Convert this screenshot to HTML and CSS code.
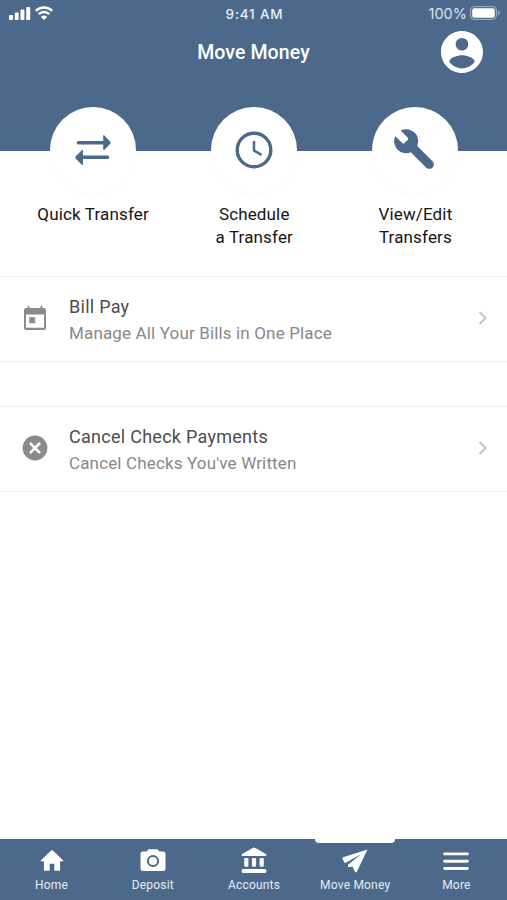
FILE: index.html
```html
<!DOCTYPE html>
<html lang="en">
<head>
<meta charset="utf-8">
<title>Move Money</title>
<link rel="stylesheet" href="styles.css">
</head>
<body>
<div class="app">
  <header class="header">
    <div class="status">
      <div class="status-left">
        <svg class="signal" viewBox="0 0 22 14" fill="#fff"><rect x="0" y="9" width="4" height="5" rx="1"/><rect x="5.7" y="6.5" width="4" height="7.5" rx="1"/><rect x="11.4" y="3.5" width="4" height="10.5" rx="1"/><rect x="17.2" y="1" width="4" height="13" rx="1"/></svg>
        <svg class="wifi" viewBox="0 0 18 14" fill="none" stroke="#fff" stroke-width="2.5"><path d="M.8 4.900a11.800 11.800 0 0 1 16.400 0M3.600 8.200a7.800 7.800 0 0 1 10.800 0"/><path d="M9 14 5.900 11a4.500 4.500 0 0 1 6.200 0z" fill="#fff" stroke="none"/></svg>
      </div>
      <div class="time">9:41 AM</div>
      <div class="status-right"><span class="percent">100%</span>
        <svg class="battery" viewBox="0 0 30 14"><rect x=".6" y=".6" width="25.8" height="12.8" rx="3.5" fill="none" stroke="#a3b3c7"/><rect x="2.2" y="2.2" width="22.6" height="9.6" rx="2" fill="#fff"/><path d="M28 4.800v4.400c1-.4 1.600-1.200 1.600-2.200S29 5.200 28 4.800z" fill="#a3b3c7"/></svg>
      </div>
    </div>
    <div class="titlebar">
      <h1>Move Money</h1>
      <svg class="avatar" viewBox="2 2 20 20" fill="#fff"><path d="M12 2C6.480 2 2 6.480 2 12s4.480 10 10 10 10-4.480 10-10S17.520 2 12 2zm0 3.300c1.660 0 3 1.340 3 3s-1.340 3-3 3-3-1.340-3-3 1.340-3 3-3zm0 14.500c-2.500 0-4.710-1.180-6-3.120.03-1.990 4-3.080 6-3.080 1.990 0 5.970 1.090 6 3.080-1.290 1.940-3.500 3.120-6 3.120z"/></svg>
    </div>
  </header>
  <nav class="actions">
    <a class="action"><span class="disc"><svg viewBox="0 0 86 86" fill="#4c698b"><path d="M28.500 34h24.700v-5.200q.1-1.300 1.200-.4l5.900 6.300q.9 1 0 2l-5.900 6.100q-1.100.8-1.200-.5V37.500H28.500a1.750 1.750 0 0 1 0-3.500zM57.500 52H33v5.300q-.1 1.300-1.200.4l-6.200-6.200q-.9-1 0-2l6.200-6.300q1.100-.9 1.200.4v4.900h24.500a1.750 1.750 0 0 1 0 3.500z"/></svg></span><span>Quick Transfer</span></a>
    <a class="action"><span class="disc"><svg viewBox="0 0 86 86" fill="none" stroke="#4c698b"><circle cx="43" cy="43" r="16.800" stroke-width="3.400"/><path d="M43 34v9.500l7.500 4.300" stroke-width="2.500"/></svg></span><span>Schedule<br>a Transfer</span></a>
    <a class="action"><span class="disc"><svg viewBox="0 0 86 86" fill="#4c698b"><path d="M28.700 23.600C34 20.700 40.800 23 44.300 27.500C46.500 30.800 46.600 35 45.300 38.900L60.700 54.400C64.500 58.800 58.600 64.300 54.300 60.700L38.900 45.300C34.600 47 29.600 46.500 26.200 43.200C22.200 39.200 21 33.900 23.300 29.200L30.300 36.100Q31.400 37.200 32.500 36.100L35.800 32.900Q36.800 31.800 35.800 30.700Z"/></svg></span><span>View/Edit<br>Transfers</span></a>
  </nav>
  <main>
    <a class="row">
      <svg class="row-icon" viewBox="0 0 26 26" fill="#8b8b8b"><path fill-rule="evenodd" d="M5.500 1h2v2h11V1h2v2h1.500q2 0 2 2v18q0 2-2 2H4q-2 0-2-2V5q0-2 2-2h1.500zM4 9.500v13.200h18V9.500zM7.200 12.300h6v6h-6z"/></svg>
      <span class="row-text"><strong>Bill Pay</strong><small>Manage All Your Bills in One Place</small></span>
      <svg class="chevron" viewBox="0 0 10 14"><path d="m1.500 1 6 6-6 6"/></svg>
    </a>
    <a class="row">
      <svg class="row-icon" viewBox="0 0 26 26"><circle cx="13" cy="13" r="12.400" fill="#8b8b8b"/><path d="m8 8 10 10M18 8 8 18" stroke="#fff" stroke-width="2.500"/></svg>
      <span class="row-text"><strong>Cancel Check Payments</strong><small>Cancel Checks You've Written</small></span>
      <svg class="chevron" viewBox="0 0 10 14"><path d="m1.500 1 6 6-6 6"/></svg>
    </a>
  </main>
  <nav class="tabs">
    <a class="tab"><svg viewBox="0 0 30 28" fill="#fff"><path d="M14.100 4.600q.9-.8 1.800 0l10.300 9.800q.4.900-.5.900h-2.600v8.600q0 .9-.9.900h-4.900v-7h-4.600v7H7.800q-.9 0-.9-.9v-8.600H4.300q-.9 0-.5-.9z"/></svg><span>Home</span></a>
    <a class="tab"><svg viewBox="0 0 30 28" fill="#fff"><path d="M10.500 3.200h9l2 2.200H25q2.500 0 2.500 2.500v14.600q0 2.500-2.500 2.500H5q-2.500 0-2.500-2.500V7.900Q2.500 5.400 5 5.400h3.500z"/><circle cx="15" cy="15" r="5.100" stroke="#4c698b" stroke-width="2"/></svg><span>Deposit</span></a>
    <a class="tab"><svg viewBox="0 0 30 28" fill="#fff"><path d="M14.200 1.700q.8-.4 1.600 0l10.700 6.100q.9.500.9 1.400 0 .7-.8.700H3.400q-.8 0-.8-.7 0-.9.900-1.400z"/><rect x="5.200" y="12" width="4.200" height="8.800" rx="1.200"/><rect x="12.900" y="12" width="4.200" height="8.800" rx="1.200"/><rect x="20.600" y="12" width="4.200" height="8.800" rx="1.200"/><rect x="2.600" y="23" width="24.800" height="3.900" rx="1.700"/></svg><span>Accounts</span></a>
    <a class="tab active"><svg viewBox="0 0 30 28" fill="#fff"><path d="M27.500 3.500 3 11.200q-1 .5-.5 1.500l2.400 4.500L21.300 8 8 18.800v2.300l4.500-.4 2.600 5.300q.8.900 1.600 0z"/></svg><span>Move Money</span></a>
    <a class="tab"><svg viewBox="0 0 30 28" fill="none" stroke="#fff" stroke-width="2.900" stroke-linecap="round"><path d="M3.600 7.900h22.800M3.600 15.200h22.800M3.600 22.500h22.800"/></svg><span>More</span></a>
  </nav>
</div>
</body>
</html>
```

FILE: styles.css
```css
* { box-sizing: border-box; }
body { margin: 0; font-family: Roboto, "Liberation Sans", sans-serif; background: #fff; }
.app { width: 507px; height: 900px; display: flex; flex-direction: column; overflow: hidden; }
.header { height: 151px; flex: none; background: #4c698b; color: #fff; }
.status { height: 28px; padding: 0 7px 0 9px; display: grid; grid-template-columns: 1fr auto 1fr; align-items: center; font-family: Inter, Roboto, sans-serif; }
.status-left, .status-right { display: flex; align-items: center; }
.status-left { gap: 4px; padding-bottom: 2px; }
.status-right { justify-content: flex-end; gap: 3px; padding-bottom: 2px; }
.signal { width: 22px; height: 14px; }
.wifi { width: 18px; height: 14px; }
.time { font-size: 13.500px; font-weight: 500; letter-spacing: .8px; color: #e9eef4; }
.percent { color: #dbe3ec; font-size: 14.500px; line-height: 18px; padding-top: 1px; }
.battery { width: 30px; height: 14px; }
.titlebar { height: 48px; padding: 0 24px; display: grid; grid-template-columns: 1fr auto 1fr; align-items: center; }
.titlebar h1 { grid-column: 2; margin: 0; padding-top: 2px; font-size: 19.500px; line-height: 24px; font-weight: 500; letter-spacing: .1px; }
.avatar { width: 42px; height: 42px; justify-self: end; }
.actions { height: 168.500px; flex: none; margin-top: -44px; padding: 0 11px 0 12.500px; display: grid; grid-template-columns: repeat(3, 1fr); }
.action { display: flex; flex-direction: column; align-items: center; gap: 10px; text-align: center; font-size: 17px; line-height: 22.500px; letter-spacing: .15px; color: #151515; }
.disc { width: 86px; height: 86px; border-radius: 50%; background: #fff; box-shadow: 0 2px 5px rgba(0, 0, 0, .02); }
.disc svg { display: block; width: 86px; height: 86px; }
main { flex: 1; display: flex; flex-direction: column; gap: 44px; }
.row { height: 86px; padding: 0 19px 0 22px; border-top: 1px solid #f0f0f0; border-bottom: 1px solid #f0f0f0; display: flex; align-items: center; }
.row-icon { width: 26px; height: 26px; margin-bottom: 2px; }
.row-text { flex: 1; margin-left: 21px; padding-top: 2px; display: flex; flex-direction: column; }
.row-text strong { font-size: 18px; font-weight: 400; line-height: 26px; letter-spacing: .27px; color: #4d4d4d; }
.row-text small { font-size: 17px; line-height: 26px; letter-spacing: .15px; color: #888; }
.chevron { width: 10px; height: 14px; margin-bottom: 1px; fill: none; stroke: #c4c4c4; stroke-width: 2; }
.tabs { height: 61px; flex: none; padding-left: 1px; background: #4c698b; color: #e6ecf3; display: grid; grid-template-columns: repeat(5, 1fr); }
.tab { position: relative; padding-top: 7px; display: flex; flex-direction: column; align-items: center; gap: 3px; font-size: 12px; line-height: 16px; letter-spacing: .2px; }
.tab svg { width: 30px; height: 28px; }
.active::before { content: ""; position: absolute; top: 0; width: 80px; height: 4px; background: #fff; border-radius: 0 0 4px 4px; }
```
